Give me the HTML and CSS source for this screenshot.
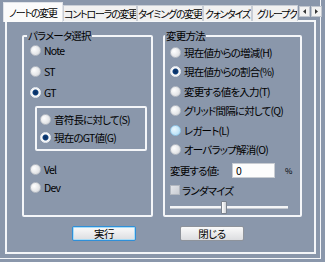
FILE: index.html
```html
<!DOCTYPE html>
<html lang="ja">
<head>
    <meta charset="UTF-8">
    <title>ノートの変更</title>
    <link rel="stylesheet" href="styles.css">
</head>
<body>
    <div class="window">
        <div class="tabs">
            <div class="tab active">ノートの変更</div>
            <div class="tab controller">コントローラの変更</div>
            <div class="tab timing">タイミングの変更</div>
            <div class="tab quantize">クォンタイズ</div>
            <div class="tab cut">グループク</div>
            <div class="scroller">
                <span class="arrow"><svg width="5" height="5" viewBox="0 0 5 5"><path d="M4 0 L1 2.5 L4 5 Z" fill="#333"/></svg></span>
                <span class="arrow"><svg width="5" height="5" viewBox="0 0 5 5"><path d="M1 0 L4 2.5 L1 5 Z" fill="#333"/></svg></span>
            </div>
        </div>

        <div class="panel">
            <div class="groups">
                <fieldset class="group params">
                    <legend>パラメータ選択</legend>
                    <label class="opt"><span class="radio"></span>Note</label>
                    <label class="opt"><span class="radio"></span>ST</label>
                    <label class="opt"><span class="radio checked"></span>GT</label>
                    <div class="subbox">
                        <label class="opt"><span class="radio"></span>音符長に対して(S)</label>
                        <label class="opt"><span class="radio checked"></span>現在のGT値(G)</label>
                    </div>
                    <label class="opt vel"><span class="radio"></span>Vel</label>
                    <label class="opt"><span class="radio"></span>Dev</label>
                </fieldset>

                <fieldset class="group method">
                    <legend>変更方法</legend>
                    <label class="opt"><span class="radio"></span>現在値からの増減(H)</label>
                    <label class="opt"><span class="radio checked"></span>現在値からの割合(%)</label>
                    <label class="opt"><span class="radio"></span>変更する値を入力(T)</label>
                    <label class="opt"><span class="radio"></span>グリッド間隔に対して(Q)</label>
                    <label class="opt"><span class="radio hover"></span>レガート(L)</label>
                    <label class="opt"><span class="radio"></span>オーバラップ解消(O)</label>
                    <div class="value-row">
                        <span class="value-label">変更する値:</span>
                        <span class="value-input">0</span>
                        <span class="unit">%</span>
                    </div>
                    <label class="opt check-row"><span class="checkbox"></span>ランダマイズ</label>
                    <div class="slider">
                        <span class="track left"></span>
                        <span class="thumb"></span>
                        <span class="track right"></span>
                    </div>
                </fieldset>
            </div>

            <div class="actions">
                <button class="btn default">実行</button>
                <button class="btn">閉じる</button>
            </div>
        </div>
    </div>
</body>
</html>
```

FILE: styles.css
```css
:root {
    --bg: #8a97ab;
    --line: #f4f6f9;
    --text: #000000;
}

* {
    margin: 0;
    padding: 0;
    box-sizing: border-box;
}

body {
    width: 325px;
    height: 262px;
    background: var(--bg);
    font-family: "Noto Sans CJK JP", "Noto Sans", sans-serif;
    font-size: 10.5px;
    letter-spacing: -0.8px;
    font-feature-settings: "palt";
    color: var(--text);
    overflow: hidden;
}

.window {
    width: 321px;
    height: 259px;
    border-right: 1px solid var(--line);
    border-bottom: 1px solid var(--line);
}

/* Tab strip */
.tabs {
    display: flex;
    align-items: flex-end;
    height: 21px;
    padding-left: 3px;
}

.tab {
    flex: none;
    height: 16px;
    line-height: 15px;
    font-size: 10px;
    letter-spacing: -1.2px;
    text-align: center;
    background: #f1f1f1;
    border: 1px solid #c9ced6;
    border-bottom: none;
    white-space: nowrap;
    overflow: hidden;
}

.tab.active {
    width: 60px;
    height: 20px;
    line-height: 19px;
    background: #fbfbfb;
    border-color: #e0e3e8;
    margin-bottom: -1px;
    position: relative;
    z-index: 1;
}

.tab.controller {
    width: 74px;
}

.tab.timing {
    width: 66px;
}

.tab.quantize {
    width: 49px;
}

.tab.cut {
    width: 46px;
    text-align: left;
    padding-left: 4px;
}

.scroller {
    display: flex;
    gap: 1px;
    margin: 0 0 4px 1px;
}

.arrow {
    display: flex;
    align-items: center;
    justify-content: center;
    width: 11px;
    height: 11px;
    background: #f2f2f2;
    border: 1px solid #c2c7cf;
}

/* Main panel */
.panel {
    width: 311px;
    height: 234px;
    margin-left: 5px;
    margin-top: -1px;
    border: 2px solid var(--line);
    padding: 7px 11px 0 15px;
}

.groups {
    display: flex;
    gap: 10px;
}

.group {
    height: 188px;
    border: 2px solid var(--line);
    border-radius: 2px;
    display: flex;
    flex-direction: column;
}

.group legend {
    line-height: 14px;
    padding: 0 1px;
}

.params {
    width: 131px;
    padding: 0 0 0 6px;
}

.params legend {
    margin-left: -3px;
}

.method {
    width: 139px;
    padding: 2px 0 0 5px;
}

.method legend {
    margin-left: -5px;
}

.opt {
    display: flex;
    align-items: center;
    gap: 3px;
    height: 14px;
    white-space: nowrap;
}

.params > .opt + .opt {
    margin-top: 7px;
}

.params > .opt.vel {
    margin-top: 11px;
}

.params > .opt.vel + .opt {
    margin-top: 4px;
}

.method > .opt + .opt {
    margin-top: 5.5px;
}

.subbox {
    width: 112px;
    margin: 7px 0 0 5px;
    padding: 4px 0 5px 3px;
    border: 2px solid var(--line);
    border-radius: 2px;
    display: flex;
    flex-direction: column;
    gap: 4px;
}

/* Radio and check marks */
.radio {
    flex: none;
    width: 11px;
    height: 11px;
    border-radius: 50%;
    border: 1px solid #b9bec6;
    background: radial-gradient(circle at 35% 35%, #ffffff, #d4d6da);
}

.radio.checked {
    border-color: #e9edf2;
    background: radial-gradient(circle, #0a2a5a 0, #0d3f7c 2.5px, #fdfdfd 3.5px, #e4e6ea 100%);
}

.radio.hover {
    border-color: #8fc4e6;
    background: radial-gradient(circle at 35% 35%, #eaf7ff, #a9dbf5);
}

.checkbox {
    flex: none;
    width: 10px;
    height: 10px;
    border: 1px solid #b3b8c0;
    background: linear-gradient(135deg, #e4e6ea, #c9ccd2);
}

/* Value input */
.value-row {
    display: flex;
    align-items: center;
    height: 15px;
    margin-top: 6.5px;
}

.value-label {
    width: 62px;
}

.value-input {
    width: 43px;
    height: 15px;
    background: #fdfdfd;
    border: 1px solid #c8ccd2;
    padding-left: 3px;
    line-height: 13px;
}

.unit {
    margin-left: 10px;
    font-size: 8px;
    letter-spacing: 0;
}

.check-row {
    margin-top: 5px;
    gap: 2px;
}

/* Slider */
.slider {
    display: flex;
    align-items: center;
    height: 14px;
    margin-top: 3px;
    width: 118px;
}

.track {
    height: 3px;
    background: #f4f5f7;
    border-bottom: 1px solid #c4c9d1;
}

.track.left {
    width: 51px;
}

.track.right {
    flex: 1;
}

.thumb {
    width: 6px;
    height: 13px;
    background: linear-gradient(90deg, #ffffff, #cfd2d7);
    border: 1px solid #7b828d;
    border-radius: 1px;
}

/* Buttons */
.actions {
    display: flex;
    justify-content: center;
    gap: 44px;
    margin-top: 9px;
    padding-right: 9px;
}

.btn {
    width: 64px;
    height: 15px;
    font-family: inherit;
    font-size: 10.5px;
    letter-spacing: -0.6px;
    font-feature-settings: "palt";
    line-height: 12px;
    color: var(--text);
    background: linear-gradient(#fafafa, #dcdde0);
    border: 1px solid #8e939b;
    border-radius: 2px;
}

.btn.default {
    border-color: #2f8fd8;
    box-shadow: inset 0 0 0 1px #a8dcf7;
}
```
